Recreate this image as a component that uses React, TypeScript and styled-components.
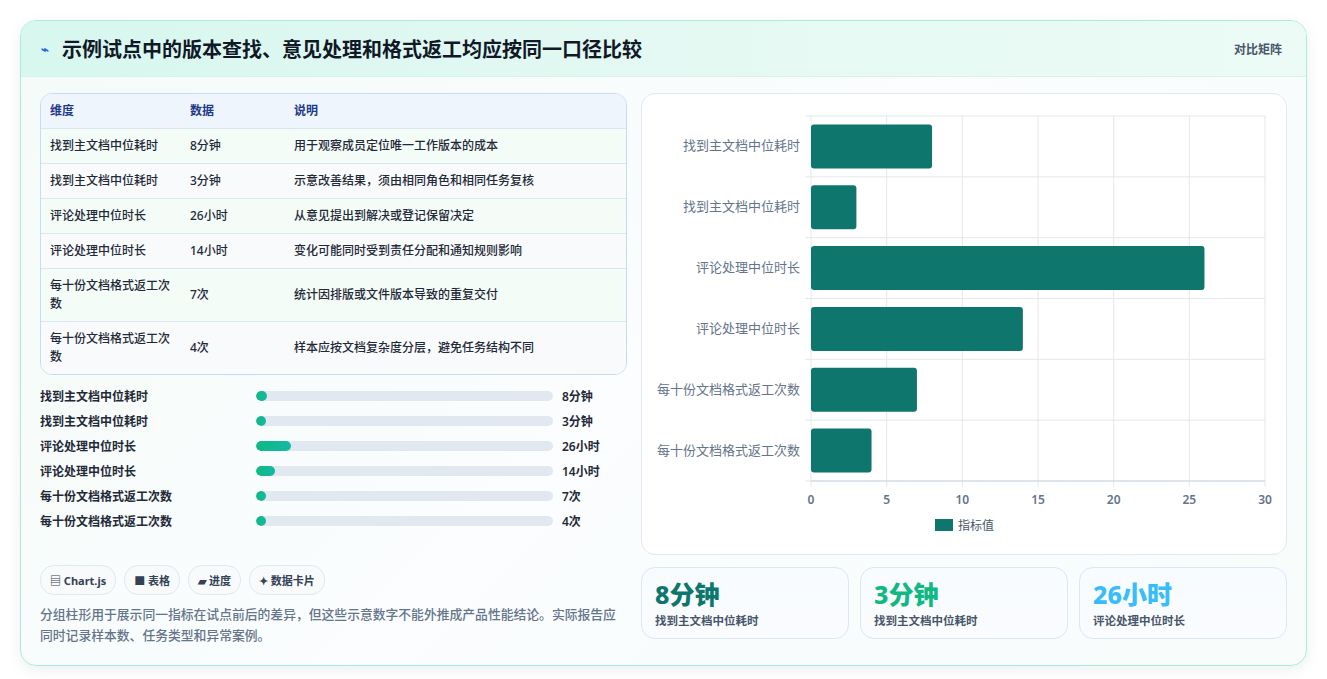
import React from "react";
import styled, { createGlobalStyle } from "styled-components";

const G = createGlobalStyle`
  body { margin:0; background:#fff; font-family: "Noto Sans", "Noto Sans CJK SC", sans-serif; }
`;
const Page = styled.div`padding:20px 20px 21px 20px;`;
const Card = styled.div`
  border:1px solid #a7eedd; border-radius:16px; overflow:hidden;
  background:linear-gradient(135deg,#f3fbf8 0%,#fbfdfe 50%,#f7fcfb 100%);
  box-shadow:0 4px 14px rgba(15,60,50,0.08);
`;
const Header = styled.div`
  height:55px; display:flex; align-items:center; justify-content:space-between;
  padding:0 20px; border-bottom:1px solid #d6f3ea;
  background:linear-gradient(90deg,#d7f7ef 0%,#e6f9f3 60%,#ecfbf6 100%);
`;
const Title = styled.h1`
  margin:0; font-size:20px; font-weight:700; color:#111827; display:flex; align-items:center; gap:9px;
`;
const Icon = styled.span`color:#2563eb; font-size:13px; width:12px;`;
const Tag = styled.span`font-size:12px; color:#475569; font-weight:600; margin-right:4px;`;
const Body = styled.div`display:grid; grid-template-columns:587px 646px; gap:14px; padding:16px 19px 19px 19px;`;
const Col = styled.div`display:flex; flex-direction:column;`;
const Table = styled.div`border:1px solid #c9dcef; border-radius:12px; overflow:hidden; background:#fff;`;
const Row = styled.div<{ head?: boolean; alt?: boolean }>`
  display:grid; grid-template-columns:140px 104px 1fr; padding:0 9px;
  min-height:${p => (p.head ? 33 : 34)}px; align-items:center;
  border-top:${p => (p.head ? "none" : "1px solid #dbe6f0")};
  background:${p => (p.head ? "#eef5fd" : p.alt ? "#f8fafc" : "#f4fcf8")};
  font-size:12px; font-weight:${p => (p.head ? 700 : 500)};
  color:${p => (p.head ? "#1e3a8a" : "#1f2937")}; line-height:18px;
  & > span { padding:8px 12px 8px 0; }
`;
const Bars = styled.div`display:flex; flex-direction:column; gap:7px; margin-top:12px; padding-right:10px;`;
const BarRow = styled.div`display:grid; grid-template-columns:216px 297px 1fr; align-items:center; font-size:12px; font-weight:600; color:#1f2937; height:18px;`;
const Track = styled.div`height:10px; border-radius:5px; background:#e2e8f0; overflow:hidden;`;
const Fill = styled.div`height:100%; border-radius:5px; background:linear-gradient(90deg,#10b981,#14b8a6); min-width:10px;`;
const Val = styled.span`padding-left:9px;`;
const Chips = styled.div`display:flex; gap:8px; margin-top:35px;`;
const Chip = styled.span`
  height:28px; padding:0 9px; border:1px solid #e2e8f0; border-radius:14px; background:#f8fafc;
  display:inline-flex; align-items:center; font-size:11px; font-weight:700; color:#334155; gap:3px;
`;
const Para = styled.p`margin:9px 0 0; font-size:12.8px; line-height:21px; color:#64748b; font-weight:500;`;
const ChartBox = styled.div`height:460px; border:1px solid #e2e8f0; border-radius:14px; background:#fff;`;
const Stats = styled.div`display:grid; grid-template-columns:repeat(3,1fr); gap:11px; margin-top:12px;`;
const Stat = styled.div`height:72px; box-sizing:border-box; padding:8px 13px; border:1px solid #dbe7f3; border-radius:14px; background:linear-gradient(180deg,#f8fbff,#fafcff);`;
const Big = styled.div<{ c: string }>`font-size:25px; font-weight:800; color:${p => p.c}; line-height:36px;`;
const Small = styled.div`font-size:11.5px; font-weight:600; color:#475569;`;

const data = [
  ["找到主文档中位耗时", "8分钟", "用于观察成员定位唯一工作版本的成本", 8],
  ["找到主文档中位耗时", "3分钟", "示意改善结果，须由相同角色和相同任务复核", 3],
  ["评论处理中位时长", "26小时", "从意见提出到解决或登记保留决定", 26],
  ["评论处理中位时长", "14小时", "变化可能同时受到责任分配和通知规则影响", 14],
  ["每十份文档格式返工次数", "7次", "统计因排版或文件版本导致的重复交付", 7],
  ["每十份文档格式返工次数", "4次", "样本应按文档复杂度分层，避免任务结构不同", 4],
] as const;

const Chart = () => {
  const x0 = 169, x1 = 623, y0 = 22, y1 = 387;
  const sx = (v: number) => x0 + (v / 30) * (x1 - x0);
  const band = (y1 - y0) / 6;
  return (
    <svg width="646" height="460" style={{ display: "block" }}>
      {[0, 5, 10, 15, 20, 25, 30].map(t => (
        <g key={t}>
          <line x1={sx(t)} x2={sx(t)} y1={y0} y2={y1 + 6} stroke="#e5e7eb" />
          <text x={sx(t)} y={y1 + 23} textAnchor="middle" fontSize="12" fontWeight="600" fill="#64748b" fontFamily="Noto Sans">{t}</text>
        </g>
      ))}
      {Array.from({ length: 7 }).map((_, i) => (
        <line key={i} x1={x0 - 6} x2={x1} y1={y0 + i * band} y2={y0 + i * band} stroke="#e5e7eb" />
      ))}
      <line x1={x0} x2={x1} y1={y1} y2={y1} stroke="#cbd5e1" />
      {data.map((d, i) => {
        const cy = y0 + i * band + band / 2;
        return (
          <g key={i}>
            <rect x={x0} y={cy - 22} width={sx(d[3]) - x0} height={44} rx="3" fill="#0f766e" />
            <text x={x0 - 11} y={cy + 4} textAnchor="end" fontSize="13" fill="#64748b" fontFamily="Noto Sans CJK SC">{d[0]}</text>
          </g>
        );
      })}
      <rect x="293" y="425" width="18" height="12" fill="#0f766e" />
      <text x="316" y="436" fontSize="12" fill="#475569" fontFamily="Noto Sans CJK SC">指标值</text>
    </svg>
  );
};

export default function App() {
  return (
    <Page>
      <G />
      <Card>
        <Header>
          <Title><Icon>⌁</Icon>示例试点中的版本查找、意见处理和格式返工均应按同一口径比较</Title>
          <Tag>对比矩阵</Tag>
        </Header>
        <Body>
          <Col>
            <Table>
              <Row head><span>维度</span><span>数据</span><span>说明</span></Row>
              {data.map((d, i) => (
                <Row key={i} alt={i % 2 === 1}><span>{d[0]}</span><span>{d[1]}</span><span>{d[2]}</span></Row>
              ))}
            </Table>
            <Bars>
              {data.map((d, i) => (
                <BarRow key={i}>
                  <span>{d[0]}</span>
                  <Track><Fill style={{ width: `${(d[3] / 220) * 100}%` }} /></Track>
                  <Val>{d[1]}</Val>
                </BarRow>
              ))}
            </Bars>
            <Chips>
              <Chip>▤ Chart.js</Chip><Chip>■ 表格</Chip><Chip>▰ 进度</Chip><Chip>✦ 数据卡片</Chip>
            </Chips>
            <Para>分组柱形用于展示同一指标在试点前后的差异，但这些示意数字不能外推成产品性能结论。实际报告应同时记录样本数、任务类型和异常案例。</Para>
          </Col>
          <Col>
            <ChartBox><Chart /></ChartBox>
            <Stats>
              <Stat><Big c="#0f766e">8分钟</Big><Small>找到主文档中位耗时</Small></Stat>
              <Stat><Big c="#10b981">3分钟</Big><Small>找到主文档中位耗时</Small></Stat>
              <Stat><Big c="#38bdf8">26小时</Big><Small>评论处理中位时长</Small></Stat>
            </Stats>
          </Col>
        </Body>
      </Card>
    </Page>
  );
}
